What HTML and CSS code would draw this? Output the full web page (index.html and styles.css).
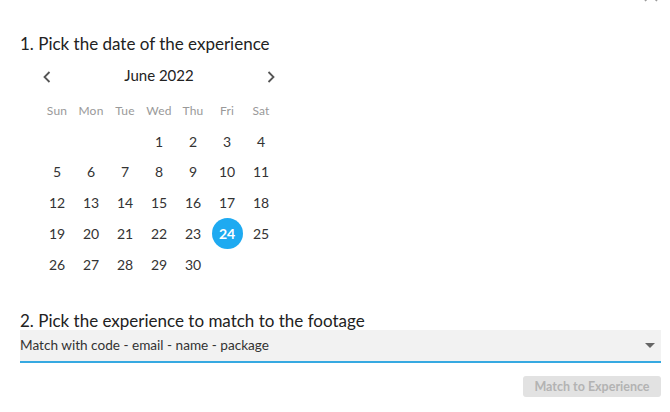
FILE: index.html
```html
<!DOCTYPE html>
<html lang="en">
<head>
<meta charset="utf-8">
<title>Match footage</title>
<link rel="stylesheet" href="styles.css">
</head>
<body>
<div class="dialog">
  <svg class="close" width="16" height="16" viewBox="0 0 16 16"><path d="M2 2 L14 14 M14 2 L2 14" stroke="#9a9a9a" stroke-width="1.6" fill="none"/></svg>
  <h2 class="step step-one">1. Pick the date of the experience</h2>
  <div class="calendar">
    <div class="cal-head">
      <span class="nav"><svg width="10" height="14" viewBox="0 0 10 14"><path d="M7.5 2 L2.5 7 L7.5 12" stroke="#555" stroke-width="1.8" fill="none"/></svg></span>
      <span class="month">June 2022</span>
      <span class="nav"><svg width="10" height="14" viewBox="0 0 10 14"><path d="M2.5 2 L7.5 7 L2.5 12" stroke="#555" stroke-width="1.8" fill="none"/></svg></span>
    </div>
    <div class="grid">
      <span class="wd">Sun</span><span class="wd">Mon</span><span class="wd">Tue</span><span class="wd">Wed</span><span class="wd">Thu</span><span class="wd">Fri</span><span class="wd">Sat</span>
      <span></span><span></span><span></span><span class="d">1</span><span class="d">2</span><span class="d">3</span><span class="d">4</span>
      <span class="d">5</span><span class="d">6</span><span class="d">7</span><span class="d">8</span><span class="d">9</span><span class="d">10</span><span class="d">11</span>
      <span class="d">12</span><span class="d">13</span><span class="d">14</span><span class="d">15</span><span class="d">16</span><span class="d">17</span><span class="d">18</span>
      <span class="d">19</span><span class="d">20</span><span class="d">21</span><span class="d">22</span><span class="d">23</span><span class="d sel"><b>24</b></span><span class="d">25</span>
      <span class="d">26</span><span class="d">27</span><span class="d">28</span><span class="d">29</span><span class="d">30</span><span></span><span></span>
    </div>
  </div>
  <h2 class="step step-two">2. Pick the experience to match to the footage</h2>
  <div class="select">
    <span class="select-text">Match with code - email - name - package</span>
    <span class="caret"></span>
  </div>
  <div class="actions">
    <button class="btn" disabled>Match to Experience</button>
  </div>
</div>
</body>
</html>
```
FILE: styles.css
```css
html, body {
  margin: 0;
  padding: 0;
  background: #fff;
}
body {
  font-family: "Lato", "Noto Sans", sans-serif;
  color: #333;
}
.dialog {
  position: relative;
  width: 670px;
  height: 412px;
  padding: 0 9px 0 20px;
  box-sizing: border-box;
  overflow: hidden;
}
.close {
  position: absolute;
  top: -13px;
  left: 643px;
}
.step {
  margin: 0;
  font-weight: 400;
  font-size: 17px;
  line-height: 24px;
  color: #222;
}
.step-one {
  padding-top: 32px;
}
.calendar {
  width: 238px;
  margin: 7px 0 0 20px;
}
.cal-head {
  display: flex;
  align-items: center;
  justify-content: space-between;
  height: 24px;
}
.nav {
  width: 14px;
  display: flex;
  justify-content: center;
  padding-top: 4px;
}
.month {
  font-size: 15px;
  color: #222;
}
.grid {
  display: grid;
  grid-template-columns: repeat(7, 34px);
  grid-auto-rows: 30.75px;
  margin-top: 8px;
}
.grid > span {
  display: flex;
  align-items: center;
  justify-content: center;
  font-size: 14px;
  color: #333;
}
.grid > .wd {
  font-size: 12px;
  color: #999;
  letter-spacing: 0.2px;
}
.sel b {
  width: 31px;
  height: 31px;
  border-radius: 50%;
  background: #1eaaf1;
  color: #fff;
  font-weight: 700;
  display: flex;
  align-items: center;
  justify-content: center;
}
.step-two {
  margin-top: 29px;
}
.select {
  display: flex;
  align-items: center;
  justify-content: space-between;
  height: 31px;
  background: #f2f2f2;
  border-bottom: 2px solid #36a9e1;
  margin-top: -3px;
}
.select-text {
  font-size: 13.6px;
  color: #333;
}
.caret {
  width: 0;
  height: 0;
  border-left: 5px solid transparent;
  border-right: 5px solid transparent;
  border-top: 5px solid #666;
  margin-right: 6px;
}
.actions {
  display: flex;
  justify-content: flex-end;
  margin-top: 13px;
}
.btn {
  height: 21px;
  width: 138px;
  border: 0;
  border-radius: 3px;
  background: #e2e2e2;
  color: #b3b3b3;
  font-family: inherit;
  font-weight: 700;
  font-size: 12.5px;
  padding: 0;
}
```
